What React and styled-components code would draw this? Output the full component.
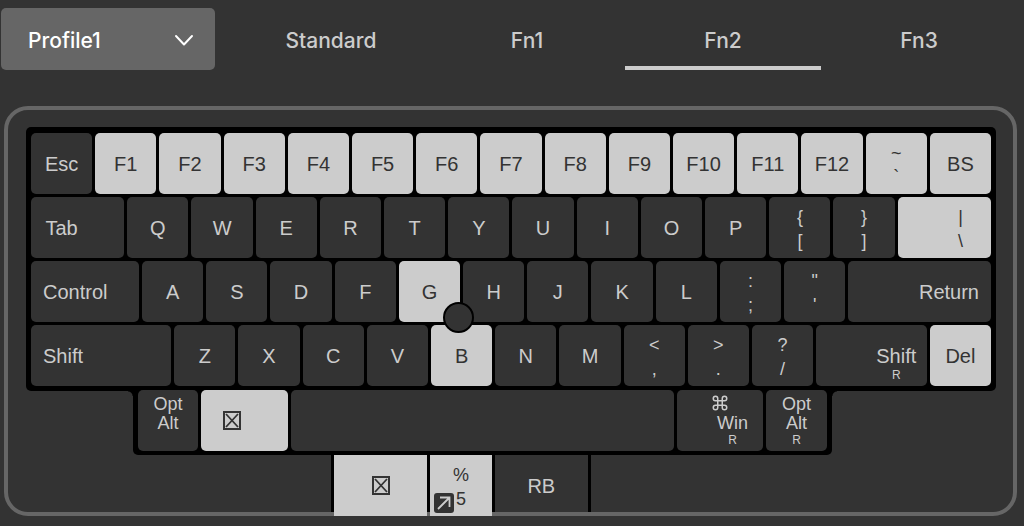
import React, { useState } from "react";
import styled, { createGlobalStyle, css } from "styled-components";
import { Command } from "lucide-react";

const color = {
  page: "#333333",
  frame: "#666666",
  light: "#cccccc",
  dark: "#333333",
  board: "#000000",
};

const GlobalStyle = createGlobalStyle`
  *, *::before, *::after { box-sizing: border-box; }
  body {
    margin: 0;
    background: ${color.page};
    color: ${color.light};
    font-family: "Liberation Sans", Arial, sans-serif;
  }
`;

const Page = styled.main`
  padding: 8px 7px 10px 1px;
  overflow: hidden;
`;

const Header = styled.header`
  display: flex;
  gap: 18px;
  height: 62px;
  font-family: Inter, sans-serif;
`;

const ProfilePicker = styled.div`
  position: relative;
  flex: none;
  width: 214px;
`;

const ProfileSelect = styled.select`
  width: 100%;
  height: 100%;
  padding: 2px 48px 0 27px;
  border: 0;
  border-radius: 5px;
  appearance: none;
  background: ${color.frame};
  color: #ffffff;
  font: 500 21px Inter, sans-serif;
`;

const Chevron = styled.svg`
  position: absolute;
  top: 26px;
  right: 21px;
  width: 20px;
  height: 12px;
  pointer-events: none;
`;

const Tabs = styled.nav`
  display: grid;
  flex: 1;
  grid-template-columns: repeat(4, minmax(0, 1fr));
`;

const Tab = styled.button`
  padding: 6px 0 0;
  border: 0;
  border-bottom: 4px solid ${(p) => (p.$active ? color.light : "transparent")};
  background: none;
  color: ${color.light};
  font: 500 21px Inter, sans-serif;
`;

const Frame = styled.section`
  margin: 36px 0 0 3px;
  padding: 17px 17px 0 18px;
  border: 4px solid ${color.frame};
  border-radius: 24px;
`;

const Board = styled.div`
  position: relative;
  display: grid;
  gap: 3px;
  padding: 6px 2px 5px 5px;
  border-radius: 5px;
  background: ${color.board};
`;

const Row = styled.div`
  display: grid;
  grid-template-columns: ${(p) => p.$units.map((u) => `minmax(0, ${u}fr)`).join(" ")};
`;

const ThumbArea = styled.div`
  display: grid;
  grid-template-columns: 107fr 699fr 164fr;
  margin-top: -1px;
`;

const ThumbBoard = styled.div`
  position: relative;
  grid-column: 2;
  padding: 0 2px 4px 5px;
  border-radius: 0 0 5px 5px;
  background: ${color.board};

  &::before,
  &::after {
    content: "";
    position: absolute;
    top: 1px;
    width: 5px;
    height: 5px;
  }
  &::before {
    right: 100%;
    background: radial-gradient(circle at 0 100%, transparent 4px, ${color.board} 5px);
  }
  &::after {
    left: 100%;
    background: radial-gradient(circle at 100% 100%, transparent 4px, ${color.board} 5px);
  }
`;

const MouseArea = styled.div`
  display: grid;
  grid-template-columns: 305fr 260fr 405fr;
`;

const MouseBoard = styled.div`
  grid-column: 2;
  height: 57px;
  padding-left: 3px;
  background: ${color.board};
`;

const Key = styled.button`
  position: relative;
  display: flex;
  align-items: flex-start;
  justify-content: ${(p) => ({ left: "flex-start", right: "flex-end" }[p.$align] || "center")};
  height: 61px;
  margin: 0 3px 0 0;
  padding: ${(p) => (p.$inset ? "0 12px" : 0)};
  border: 0;
  border-radius: 5px;
  background: ${(p) => (p.$lit ? color.light : color.dark)};
  color: ${(p) => (p.$lit ? color.dark : color.light)};
  font: 20px "Liberation Sans", Arial, sans-serif;
  white-space: nowrap;

  ${(p) =>
    p.$mouse &&
    css`
      height: ${p.$lit ? 61 : 57}px;
      border-radius: 0;
    `}
`;

const Legend = styled.span`
  position: relative;
  display: flex;
  flex-direction: column;
  align-items: center;
  justify-content: center;
  height: 61px;
  padding-top: 2px;
  ${(p) => p.$cell && "width: 61px;"}
`;

const IconLegend = styled(Legend)`
  padding-top: 0;
`;

const PairLegend = styled(Legend)`
  font-size: 18px;
  line-height: 24px;
`;

const StackLegend = styled(Legend)`
  justify-content: flex-start;
  padding-top: 5px;
  font-size: 18px;
  line-height: 19px;
`;

const SideMark = styled.small`
  position: absolute;
  bottom: 4px;
  left: 0;
  width: 100%;
  font-size: 12px;
  line-height: 14px;
  text-align: center;
`;

const CommandMark = styled.span`
  position: absolute;
  top: 4px;
  left: 0;
  display: flex;
  justify-content: center;
  width: 100%;
`;

const LayerBadge = styled.svg`
  position: absolute;
  top: 38px;
  left: 4px;
  width: 20px;
  height: 20px;
`;

const PointingStick = styled.div`
  position: absolute;
  top: 175px;
  left: 43%;
  width: 31px;
  height: 31px;
  border: 2px solid ${color.board};
  border-radius: 50%;
  background: ${color.dark};
`;

const CrossedBox = () => (
  <svg width="18" height="19" viewBox="0 0 18 19" fill="none" stroke="currentColor" strokeWidth="2" aria-hidden="true">
    <rect x="1" y="1" width="16" height="17" />
    <path d="M3 3 15 16M15 3 3 16" strokeWidth="1.8" />
  </svg>
);

const k = (label, rest = {}) => ({ label, u: 1, ...rest });
const letters = (text) => text.split("").map((c) => k(c));

const mainRows = [
  [
    k("Esc"),
    ...Array.from({ length: 12 }, (_, i) => k(`F${i + 1}`, { lit: true })),
    k("~ `", { pair: ["~", "`"], lit: true }),
    k("BS", { lit: true }),
  ],
  [
    k("Tab", { u: 1.5, align: "left", cell: true }),
    ...letters("QWERTYUIOP"),
    k("{ [", { pair: ["{", "["] }),
    k("} ]", { pair: ["}", "]"] }),
    k("| \\", { pair: ["|", "\\"], u: 1.5, align: "right", cell: true, lit: true }),
  ],
  [
    k("Control", { u: 1.73, align: "left", inset: true }),
    ...letters("ASDF"),
    k("G", { lit: true }),
    ...letters("HJKL"),
    k(": ;", { pair: [":", ";"] }),
    k("\" '", { pair: ['"', "'"] }),
    k("Return", { u: 2.27, align: "right", inset: true }),
  ],
  [
    k("Shift", { u: 2.23, align: "left", inset: true }),
    ...letters("ZXCV"),
    k("B", { lit: true }),
    ...letters("NM"),
    k("< ,", { pair: ["<", ","] }),
    k("> .", { pair: [">", "."] }),
    k("? /", { pair: ["?", "/"] }),
    k("Shift", { u: 1.77, align: "right", cell: true, side: "R" }),
    k("Del", { lit: true }),
  ],
];

const thumbRow = [
  k("Opt Alt", { u: 63, stack: ["Opt", "Alt"] }),
  k("Unassigned", { u: 90, align: "left", cell: true, crossed: true, lit: true }),
  k("Space", { u: 386, blank: true }),
  k("Win", { u: 89, align: "right", cell: true, command: true, stack: ["\u00a0", "Win"], side: "R" }),
  k("Opt Alt", { u: 64, stack: ["Opt", "Alt"], side: "R" }),
];

const mouseRow = [
  k("Unassigned", { u: 1.5, crossed: true, lit: true, mouse: true }),
  k("% 5", { pair: ["%", "5"], lit: true, mouse: true, badge: true }),
  k("RB", { u: 1.5, mouse: true }),
];

function KeyLegend({ item }) {
  const side = item.side && <SideMark>{item.side}</SideMark>;
  if (item.blank) return null;
  if (item.crossed) {
    return (
      <IconLegend $cell={item.cell}>
        <CrossedBox />
      </IconLegend>
    );
  }
  if (item.pair || item.stack) {
    const Wrap = item.pair ? PairLegend : StackLegend;
    return (
      <Wrap $cell={item.cell}>
        {(item.pair || item.stack).map((line) => (
          <span key={line}>{line}</span>
        ))}
        {side}
      </Wrap>
    );
  }
  return (
    <Legend $cell={item.cell}>
      {item.label}
      {side}
    </Legend>
  );
}

function KeyRow({ keys }) {
  return (
    <Row $units={keys.map((item) => item.u)}>
      {keys.map((item, i) => (
        <Key
          key={i}
          type="button"
          aria-label={item.blank || item.crossed ? item.label : undefined}
          $align={item.align}
          $inset={item.inset}
          $lit={item.lit}
          $mouse={item.mouse}
        >
          {item.command && (
            <CommandMark>
              <Command size={18} strokeWidth={2} />
            </CommandMark>
          )}
          <KeyLegend item={item} />
          {item.badge && (
            <LayerBadge viewBox="0 0 20 20" fill="none" aria-hidden="true">
              <rect width="20" height="20" rx="3" fill={color.dark} />
              <path d="M4 16 15.5 4.5M6 4.5H15.5V14" stroke={color.light} strokeWidth="1.8" />
            </LayerBadge>
          )}
        </Key>
      ))}
    </Row>
  );
}

export default function App() {
  const [tab, setTab] = useState("Fn2");
  return (
    <Page>
      <GlobalStyle />
      <Header>
        <ProfilePicker>
          <ProfileSelect aria-label="Profile" defaultValue="Profile1">
            <option>Profile1</option>
          </ProfileSelect>
          <Chevron viewBox="0 0 20 12" fill="none" stroke="#ffffff" strokeWidth="2" strokeLinecap="round" strokeLinejoin="round" aria-hidden="true">
            <path d="M2 2 10 10.5 18 2" />
          </Chevron>
        </ProfilePicker>
        <Tabs aria-label="Layers">
          {["Standard", "Fn1", "Fn2", "Fn3"].map((name) => (
            <Tab key={name} type="button" $active={name === tab} onClick={() => setTab(name)}>
              {name}
            </Tab>
          ))}
        </Tabs>
      </Header>
      <Frame>
        <Board>
          {mainRows.map((keys, i) => (
            <KeyRow key={i} keys={keys} />
          ))}
          <PointingStick />
        </Board>
        <ThumbArea>
          <ThumbBoard>
            <KeyRow keys={thumbRow} />
          </ThumbBoard>
        </ThumbArea>
        <MouseArea>
          <MouseBoard>
            <KeyRow keys={mouseRow} />
          </MouseBoard>
        </MouseArea>
      </Frame>
    </Page>
  );
}
